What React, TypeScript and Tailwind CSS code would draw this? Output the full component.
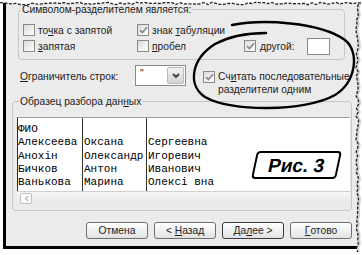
import React from 'react'

function rnd(i: number) {
  const s = Math.sin(i * 12.9898 + 78.233) * 43758.5453
  return s - Math.floor(s)
}

function Check({ checked }: { checked?: boolean }) {
  return (
    <span className="w-[12px] h-[12px] shrink-0 border border-[#8a8a8a] bg-linear-to-br from-[#dcdcdc] to-white flex items-center justify-center">
      {checked && (
        <svg width="9" height="8" viewBox="0 0 9 8">
          <path d="M1 4.2l2.4 2.4L8 1.2" fill="none" stroke="#8a8a8a" strokeWidth="1.7" />
        </svg>
      )}
    </span>
  )
}

function Btn({ children, strong }: { children: React.ReactNode; strong?: boolean }) {
  return (
    <div
      className={
        'w-[62px] h-[17px] rounded-[3px] border bg-linear-to-b from-white to-[#e2e2e2] flex items-center justify-center whitespace-pre ' +
        (strong ? 'border-[#3a3a3a]' : 'border-[#6e6e6e]')
      }
    >
      {children}
    </div>
  )
}

function Edges() {
  const top: string[] = []
  for (let x = 0; x <= 364; x += 4) top.push(`${x},${(2.2 + rnd(x) * 2.6).toFixed(1)}`)
  const right: [number, number][] = []
  for (let y = 0; y <= 252; y += 4) right.push([356 + rnd(y + 500) * 2.6, y])
  const line = right.map(([x, y]) => `${x.toFixed(1)},${y}`).join(' ')
  const shade = right.map(([x, y]) => `${(x + 2.5).toFixed(1)},${y}`).join(' ')
  return (
    <svg className="absolute inset-0 pointer-events-none" width="362" height="255" viewBox="0 0 362 255">
      <polygon points={`${line} 362,252 362,0`} fill="#d4d4d4" />
      <polygon points={`${shade} 362,252 362,0`} fill="#fff" />
      <polyline points={line} fill="none" stroke="#222" strokeWidth="1.3" strokeDasharray="3 1.5" />
      <polygon points={`0,0 ${top.join(' ')} 364,0`} fill="#fff" />
      <polyline points={top.join(' ')} fill="none" stroke="#222" strokeWidth="1.3" strokeDasharray="3 1.5" />
      <path
        d="M232 25 C262 19, 320 22, 345 40 C360 52, 356 82, 335 95 C305 112, 230 112, 205 97 C188 86, 190 60, 215 44 C232 35, 250 33, 266 33"
        fill="none"
        stroke="#000"
        strokeWidth="2.4"
        strokeLinecap="round"
      />
    </svg>
  )
}

const names = ['ФИО', 'Алексеева', 'Анохін', 'Бичков', 'Ванькова']
const first = ['', 'Оксана', 'Олександр', 'Антон', 'Марина']
const middle = ['', 'Сергеевна', 'Игоревич', 'Иванович', 'Олексі вна']

function App(): JSX.Element {
  return (
    <div className="relative w-[362px] h-[255px] bg-white overflow-hidden font-['Liberation_Sans',Arial,sans-serif] text-[10.25px] leading-[13px] text-[#1c1c1c]">
      <div className="ml-[3px] mt-[3px] w-[355px] h-[246px] bg-[#ebebeb] border-l-[3px] border-b-[3px] border-black">
        <fieldset className="mt-[3px] ml-[12px] w-[327px] h-[57px] border border-[#c6c6c6] rounded-[4px]">
          <legend className="ml-[2px] px-[1px]">Символом-разделителем является:</legend>
          <div className="mt-[8px] pl-[4px] flex h-[12px] items-center">
            <div className="w-[114px] flex items-center gap-[3px]">
              <Check />
              <span>
                то<span className="underline">ч</span>ка с запятой
              </span>
            </div>
            <div className="flex items-center gap-[3px]">
              <Check checked />
              <span>
                знак <span className="underline">т</span>абуляции
              </span>
            </div>
          </div>
          <div className="mt-[4px] pl-[4px] flex h-[12px] items-center">
            <div className="w-[114px] flex items-center gap-[3px]">
              <Check />
              <span>
                <span className="underline">з</span>апятая
              </span>
            </div>
            <div className="w-[107px] flex items-center gap-[3px]">
              <Check />
              <span>
                <span className="underline">п</span>робел
              </span>
            </div>
            <div className="flex items-center gap-[4px]">
              <Check checked />
              <span>
                <span className="underline">д</span>ругой:
              </span>
              <span className="ml-[9px] w-[23px] h-[17px] bg-white border border-[#8a8a8a]" />
            </div>
          </div>
        </fieldset>

        <div className="mt-[5px] flex items-start h-[30px]">
          <span className="ml-[14px] mt-[5px] w-[115px]">
            <span className="underline">О</span>граничитель строк:
          </span>
          <div className="w-[51px] h-[21px] bg-white border border-[#8a8a8a] flex">
            <span className="flex-1 pl-[4px] pt-[1px] text-[10px]">"</span>
            <span className="w-[17px] m-[1px] rounded-[2px] bg-linear-to-b from-[#f4f4f4] to-[#d2d2d2] border border-[#b8b8b8] flex items-center justify-center">
              <svg width="8" height="6" viewBox="0 0 8 6">
                <path d="M1 1l3 3 3-3" fill="none" stroke="#3a3a3a" strokeWidth="1.8" />
              </svg>
            </span>
          </div>
          <div className="ml-[17px] flex items-start gap-[3px]">
            <span className="mt-[6px]">
              <Check checked />
            </span>
            <span className="mt-[5px]">
              Сч<span className="underline">и</span>тать последовательные
              <br />
              разделители одним
            </span>
          </div>
        </div>

        <fieldset className="ml-[6px] w-[340px] h-[116px] border border-[#c6c6c6] rounded-[4px]">
          <legend className="ml-[6px] px-[1px]">
            Образец разбора дан<span className="underline">н</span>ых
          </legend>
          <div className="relative mt-[9px] ml-[4px] w-[333px] h-[74px] flex bg-white border-l border-t border-l-[#2a2a2a] border-t-[#a0a0a0] font-['Liberation_Mono',monospace] text-[11px] leading-[13.25px] text-black">
            <div className="w-[65px] border-r border-[#333] pt-[5px]">
              {names.map((n) => (
                <div key={n}>{n}</div>
              ))}
            </div>
            <div className="w-[64px] border-r border-[#333] pt-[5px] pl-[1px]">
              {first.map((n, i) => (
                <div key={i} className="h-[13.25px]">{n}</div>
              ))}
            </div>
            <div className="pt-[5px] pl-[1px]">
              {middle.map((n, i) => (
                <div key={i} className="h-[13.25px] whitespace-pre">{n}</div>
              ))}
            </div>
            <div className="absolute left-[236px] top-[33px] w-[85px] h-[28px] -skew-x-12 bg-white border-2 border-black rounded-[4px] flex items-center justify-center font-['Liberation_Sans',Arial,sans-serif] font-bold text-[19px] leading-none">
              Рис. 3
            </div>
          </div>
          <div className="ml-[4px] w-[333px] h-[13px] bg-linear-to-b from-[#f7f7f7] to-[#e6e6e6] border-t border-[#d0d0d0] flex items-center pl-[3px]">
            <span className="w-[12px] h-[11px] rounded-[2px] border border-[#c0c0c0] bg-white flex items-center justify-center">
              <svg width="5" height="7" viewBox="0 0 5 7">
                <path d="M4 1L1.5 3.5 4 6" fill="none" stroke="#b0b0b0" strokeWidth="1.2" />
              </svg>
            </span>
          </div>
        </fieldset>

        <div className="mt-[11px] ml-[80px] flex gap-[6px]">
          <Btn>Отмена</Btn>
          <Btn>
            {'< '}
            <span className="underline">Н</span>азад
          </Btn>
          <Btn strong>
            Да<span className="underline">л</span>ее {'>'}
          </Btn>
          <Btn>
            <span className="underline">Г</span>отово
          </Btn>
        </div>
      </div>
      <Edges />
    </div>
  )
}

export default App
